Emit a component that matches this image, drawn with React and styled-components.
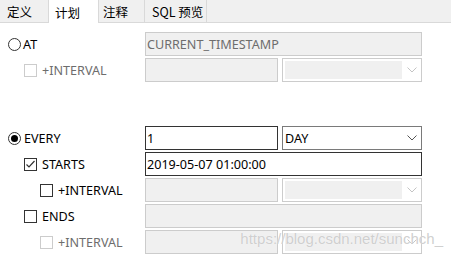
import styled, { createGlobalStyle } from "styled-components"

const GlobalStyle = createGlobalStyle`
    body {
        margin: 0;
        background: #ffffff;
        font-family: "Noto Sans", "Noto Sans CJK SC", sans-serif;
        font-size: 12.6px;
        color: #000000;
    }
`

const Page = styled.div`
    position: relative;
    width: 451px;
    height: 258px;
    overflow: hidden;
    background: #ffffff;
`

const TabBar = styled.div`
    display: flex;
    height: 22px;
    background: #f0f0f0;
    border-bottom: 1px solid #d9d9d9;
`

const Tab = styled.div`
    box-sizing: border-box;
    width: ${p => p.$w}px;
    padding-left: ${p => p.$pad}px;
    height: ${p => (p.$active ? 23 : 22)}px;
    margin-bottom: ${p => (p.$active ? -1 : 0)}px;
    background: ${p => (p.$active ? "#ffffff" : "#f0f0f0")};
    border-right: 1px solid #d9d9d9;
    display: flex;
    align-items: ${p => (p.$active ? "flex-start" : "center")};
    padding-top: ${p => (p.$active ? 3 : 0)}px;
    font-family: "Noto Sans CJK SC", "Noto Sans", sans-serif;
    font-size: 12.5px;
    color: #000000;
`

const Form = styled.div`
    display: flex;
    flex-direction: column;
    gap: 2px;
    padding-top: 9px;
`

const Row = styled.div`
    display: flex;
    height: 24px;
    margin-top: ${p => p.$gap || 0}px;
`

const Label = styled.div`
    box-sizing: border-box;
    width: 145px;
    padding-left: ${p => p.$indent}px;
    padding-top: 1px;
    display: flex;
    align-items: center;
    gap: ${p => p.$gap || 5}px;
    color: ${p => (p.$disabled ? "#6d6d6d" : "#000000")};
    white-space: nowrap;
`

const Radio = styled.span`
    box-sizing: border-box;
    width: 13px;
    height: 13px;
    border-radius: 50%;
    border: 1px solid #333333;
    display: flex;
    align-items: center;
    justify-content: center;
    &::after {
        content: "";
        width: 7px;
        height: 7px;
        border-radius: 50%;
        background: #000000;
        display: ${p => (p.$checked ? "block" : "none")};
    }
`

const Box = styled.span`
    box-sizing: border-box;
    width: 13px;
    height: 13px;
    border: 1px solid ${p => (p.$disabled ? "#cccccc" : "#333333")};
    background: #ffffff;
    display: flex;
    align-items: center;
    justify-content: center;
`

const Controls = styled.div`
    display: flex;
    gap: 4px;
    width: 277px;
`

const Field = styled.div`
    box-sizing: border-box;
    width: ${p => p.$w}px;
    height: 24px;
    border: 1px solid ${p => (p.$disabled ? "#cccccc" : "#333333")};
    background: ${p => (p.$disabled ? "#f0f0f0" : "#ffffff")};
    color: ${p => (p.$disabled ? "#6d6d6d" : "#000000")};
    padding: 1px 1px 0;
    display: flex;
    align-items: center;
    white-space: nowrap;
`

const Combo = styled.div`
    box-sizing: border-box;
    width: 140px;
    height: 24px;
    border: 1px solid ${p => (p.$disabled ? "#cccccc" : "#7a7a7a")};
    background: #ffffff;
    display: flex;
    align-items: stretch;
`

const ComboValue = styled.div`
    flex: 1;
    margin: ${p => (p.$disabled ? "2px 0 2px 2px" : "0")};
    padding: 1px 2px 0;
    background: ${p => (p.$disabled ? "#f0f0f0" : "#ffffff")};
    display: flex;
    align-items: center;
`

const ComboArrow = styled.div`
    width: 19px;
    display: flex;
    align-items: center;
    justify-content: center;
    color: ${p => (p.$disabled ? "#c4c4c4" : "#555555")};
`

const Watermark = styled.div`
    position: absolute;
    right: 8px;
    top: 230px;
    font-family: "Liberation Sans", Arial, sans-serif;
    font-size: 15px;
    color: rgba(195, 195, 195, 0.8);
    text-shadow: 0 0 1px #ffffff;
    pointer-events: none;
`

const Check = () => (
    <svg width="11" height="11" viewBox="0 0 11 11">
        <path d="M1.5 5.5 L4 8 L9.5 2" fill="none" stroke="#333" strokeWidth="1.2" />
    </svg>
)

const Chevron = () => (
    <svg width="10" height="6" viewBox="0 0 10 6">
        <path d="M0.5 0.5 L5 5 L9.5 0.5" fill="none" stroke="currentColor" strokeWidth="1" />
    </svg>
)

const Select = ({ value, disabled }) => (
    <Combo $disabled={disabled}>
        <ComboValue $disabled={disabled}>{value}</ComboValue>
        <ComboArrow $disabled={disabled}>
            <Chevron />
        </ComboArrow>
    </Combo>
)

const IntervalRow = ({ indent, checkDisabled, fieldsDisabled, gap }) => (
    <Row $gap={gap}>
        <Label $indent={indent} $disabled={checkDisabled}>
            <Box $disabled={checkDisabled} />
            +INTERVAL
        </Label>
        <Controls>
            <Field $w={133} $disabled={fieldsDisabled} />
            <Select disabled={fieldsDisabled} />
        </Controls>
    </Row>
)

const App = () => {
    return (
        <Page>
            <GlobalStyle />
            <TabBar>
                <Tab $w={49} $pad={7}>定义</Tab>
                <Tab $w={50} $pad={6} $active>计划</Tab>
                <Tab $w={46} $pad={4}>注释</Tab>
                <Tab $w={62} $pad={7}>SQL 预览</Tab>
            </TabBar>
            <Form>
                <Row>
                    <Label $indent={8} $gap={2}>
                        <Radio />
                        AT
                    </Label>
                    <Field $w={277} $disabled>CURRENT_TIMESTAMP</Field>
                </Row>
                <IntervalRow indent={24} checkDisabled fieldsDisabled />
                <Row $gap={42}>
                    <Label $indent={8} $gap={3}>
                        <Radio $checked />
                        EVERY
                    </Label>
                    <Controls>
                        <Field $w={133}>1</Field>
                        <Select value="DAY" />
                    </Controls>
                </Row>
                <Row>
                    <Label $indent={24}>
                        <Box>
                            <Check />
                        </Box>
                        STARTS
                    </Label>
                    <Field $w={277}>2019-05-07 01:00:00</Field>
                </Row>
                <IntervalRow indent={40} fieldsDisabled />
                <Row>
                    <Label $indent={24}>
                        <Box />
                        ENDS
                    </Label>
                    <Field $w={277} $disabled />
                </Row>
                <IntervalRow indent={40} checkDisabled fieldsDisabled />
            </Form>
            <Watermark>https://blog.csdn.net/sunchch_</Watermark>
        </Page>
    )
}

export default App
